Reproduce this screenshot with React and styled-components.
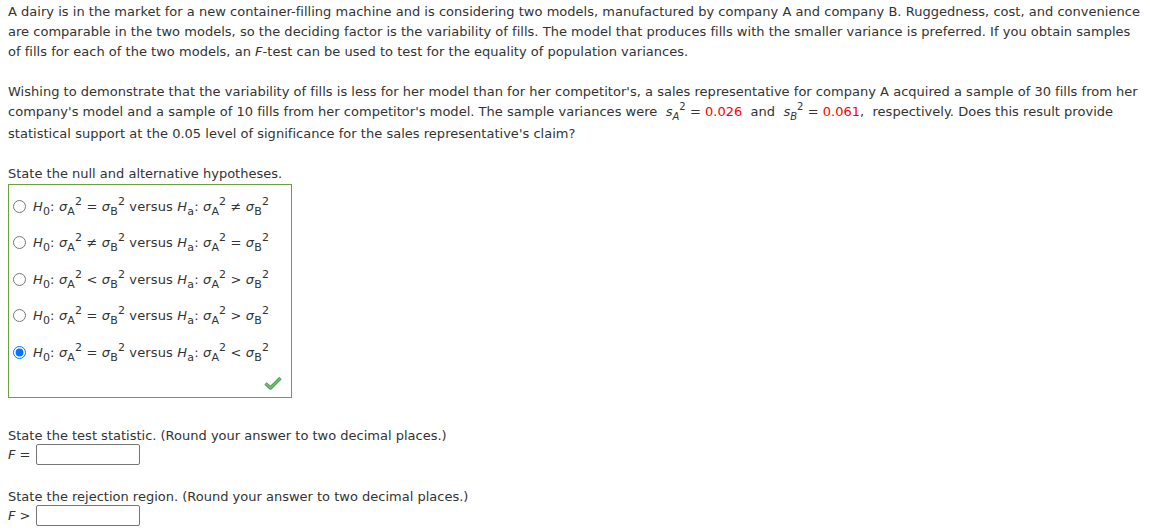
import React from 'react';
import { styled, createGlobalStyle } from 'styled-components';

const GlobalStyle = createGlobalStyle`
  body{
    margin: 0;
    background: #fff;
    font-family: "DejaVu Sans", Verdana, sans-serif;
    font-size: 13px;
    color: #333;
  }
`;

const Page = styled.div`
  width: 1134px;
  padding: 2px 0 0 8px;
  display: flex;
  flex-direction: column;
`;
const Para = styled.div`
  margin: 0 0 20px 0;
  display: flex;
  flex-direction: column;
  letter-spacing: 0.02px;
`;
const Line = styled.div`
  line-height: 20px;
  height: ${p => (p.$tall ? '22px' : '20px')};
  white-space: nowrap;
`;
const Prompt = styled.div`
  line-height: 20px;
`;
const Red = styled.span`
  color: #f00;
`;
const Sub = styled.sub`
  font-size: ${p => (p.$size || 10)}px;
  line-height: 0;
  vertical-align: -4px;
  font-style: ${p => (p.$italic ? 'italic' : 'normal')};
`;
const Sup = styled.sup`
  font-size: ${p => (p.$size || 10)}px;
  line-height: 0;
  vertical-align: 6px;
`;
const I = styled.i`
  font-style: italic;
`;
const Choices = styled.div`
  width: 284px;
  height: 214px;
  border: 1px solid #6aa03d;
  box-sizing: border-box;
  padding: 11px 0 0 4px;
  display: flex;
  flex-direction: column;
  gap: 16.5px;
  position: relative;
`;
const Option = styled.label`
  display: flex;
  align-items: center;
  height: 20px;
  gap: 7px;
  white-space: nowrap;
  letter-spacing: 0.15px;
  input{
    margin: 0;
    width: 13px;
    height: 13px;
  }
`;
const Check = styled.svg`
  position: absolute;
  right: 9px;
  bottom: 7px;
`;
const Section = styled.div`
  margin-top: 28px;
  display: flex;
  flex-direction: column;
  & + &{
    margin-top: 22px;
  }
`;
const AnswerRow = styled.div`
  display: flex;
  align-items: center;
  gap: 5px;
  margin-top: -2px;
`;
const Answer = styled.input`
  width: 104px;
  height: 21px;
  box-sizing: border-box;
  border: 1px solid #767676;
  border-radius: 2px;
  margin: 0;
`;

const Sigma = ({ s }) => (
  <>
    <I>σ</I><Sub $size={11}>{s}</Sub><Sup $size={11}>2</Sup>
  </>
);

const Hyp = ({ h0, ha }) => (
  <span>
    <I>H</I><Sub $size={11}>0</Sub>: <Sigma s="A" /> {h0} <Sigma s="B" /> versus <I>H</I><Sub $size={11}>a</Sub>: <Sigma s="A" /> {ha} <Sigma s="B" />
  </span>
);

const options = [
  ['=', '≠'],
  ['≠', '='],
  ['<', '>'],
  ['=', '>'],
  ['=', '<'],
];

const App = () => {
  return (
    <>
      <GlobalStyle />
      <Page>
        <Para>
          <Line>A dairy is in the market for a new container-filling machine and is considering two models, manufactured by company A and company B. Ruggedness, cost, and convenience</Line>
          <Line>are comparable in the two models, so the deciding factor is the variability of fills. The model that produces fills with the smaller variance is preferred. If you obtain samples</Line>
          <Line>of fills for each of the two models, an <I>F</I>-test can be used to test for the equality of population variances.</Line>
        </Para>
        <Para>
          <Line>Wishing to demonstrate that the variability of fills is less for her model than for her competitor's, a sales representative for company A acquired a sample of 30 fills from her</Line>
          <Line $tall>
            company's model and a sample of 10 fills from her competitor's model. The sample variances were&nbsp; <I>s</I><Sub $italic>A</Sub><Sup>2</Sup> = <Red>0.026</Red>&nbsp; and&nbsp; <I>s</I><Sub $italic>B</Sub><Sup>2</Sup> = <Red>0.061</Red>,&nbsp; respectively. Does this result provide
          </Line>
          <Line>statistical support at the 0.05 level of significance for the sales representative's claim?</Line>
        </Para>
        <Prompt>State the null and alternative hypotheses.</Prompt>
        <Choices>
          {options.map(([a, b], i) => (
            <Option key={i}>
              <input type="radio" name="hyp" defaultChecked={i === 4} />
              <Hyp h0={a} ha={b} />
            </Option>
          ))}
          <Check width="18" height="14" viewBox="0 0 18 14">
            <path d="M1.5 7.5 L6.5 12 L16.5 2" fill="none" stroke="#4e9e4e" strokeWidth="3.4" strokeLinejoin="round" />
            <path d="M1.5 7.5 L6.5 12 L16.5 2" fill="none" stroke="#6cc46c" strokeWidth="1.6" strokeLinejoin="round" />
          </Check>
        </Choices>
        <Section>
          <Prompt>State the test statistic. (Round your answer to two decimal places.)</Prompt>
          <AnswerRow>
            <span><I>F</I> =</span>
            <Answer type="text" />
          </AnswerRow>
        </Section>
        <Section>
          <Prompt>State the rejection region. (Round your answer to two decimal places.)</Prompt>
          <AnswerRow>
            <span><I>F</I> &gt;</span>
            <Answer type="text" />
          </AnswerRow>
        </Section>
      </Page>
    </>
  );
};

export default App;
